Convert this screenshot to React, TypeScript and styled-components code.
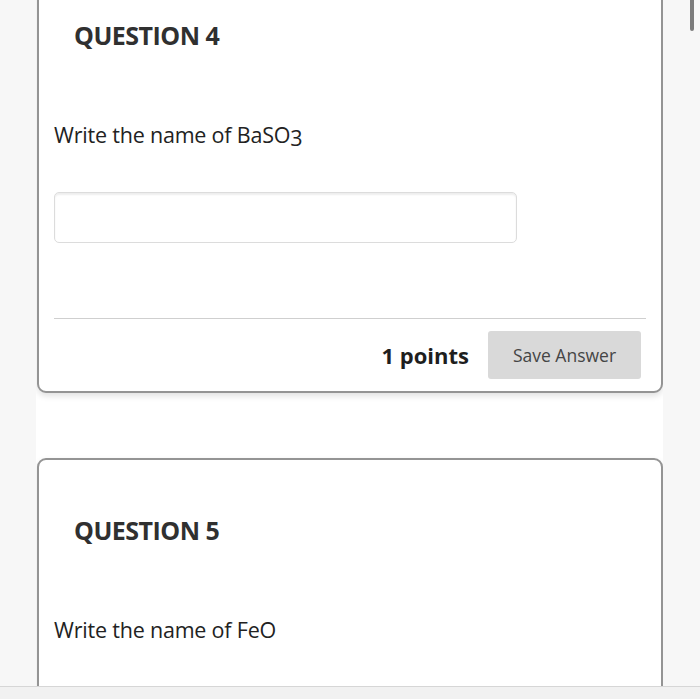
import React from "react";
import styled, { createGlobalStyle } from "styled-components";

const Global = createGlobalStyle`
  html, body { margin: 0; padding: 0; background: #f7f7f7; }
  body { font-family: "Open Sans", "Liberation Sans", sans-serif; }
  * { box-sizing: border-box; }
`;

const Page = styled.div`
  width: 700px;
  height: 699px;
  display: flex;
  flex-direction: column;
  overflow: hidden;
  background: #f7f7f7;
`;

const Viewport = styled.div`
  flex: 1;
  min-height: 0;
  display: flex;
  flex-direction: row;
  overflow: hidden;
`;

const Gutter = styled.div<{ $w: number }>`
  width: ${(p) => p.$w}px;
  flex: none;
  background: #f7f7f7;
  position: relative;
`;

const ScrollThumb = styled.div`
  position: absolute;
  left: 27px;
  top: 0;
  width: 4px;
  height: 31px;
  border-radius: 0 0 2px 2px;
  background: #7c7c7c;
`;

const Column = styled.div`
  width: 627px;
  flex: none;
  background: #ffffff;
  display: flex;
  flex-direction: column;
  gap: 65px;
`;

const Card = styled.section<{ $offset?: number }>`
  margin-left: 1px;
  margin-top: ${(p) => p.$offset ?? 0}px;
  width: 626px;
  height: 430px;
  flex: none;
  border: 2px solid #949494;
  border-radius: 9px;
  background: #fff;
  box-shadow: 0 3px 6px rgba(0, 0, 0, 0.12);
  padding: 52px 15px 11px 15px;
  display: flex;
  flex-direction: column;
`;

const Title = styled.h2`
  margin: 0 0 0 20px;
  font-size: 25px;
  line-height: 36px;
  font-weight: 700;
  letter-spacing: -0.5px;
  color: #303030;
`;

const Prompt = styled.p`
  margin: 67px 0 0 0;
  font-size: 21.5px;
  line-height: 30px;
  font-weight: 400;
  letter-spacing: -0.2px;
  color: #222;
`;

const Sub = styled.span`
  display: inline-block;
  transform: translateY(3px);
`;

const AnswerInput = styled.input`
  margin-top: 42px;
  width: 463px;
  height: 51px;
  flex: none;
  border: 1px solid #dcdcdc;
  border-radius: 5px;
  box-shadow: inset 0 2px 2px rgba(0, 0, 0, 0.07);
  background: #fff;
  outline: none;
  font: inherit;
  padding: 0 12px;
`;

const Divider = styled.hr`
  margin: 75px 0 0 0;
  border: none;
  height: 1px;
  background: #cfcfcf;
`;

const Footer = styled.div`
  margin-top: 12px;
  padding-right: 5px;
  display: flex;
  justify-content: flex-end;
  align-items: center;
  gap: 19px;
`;

const Points = styled.span`
  font-size: 22px;
  font-weight: 700;
  color: #1e1e1e;
  line-height: 30px;
`;

const SaveButton = styled.button`
  width: 153px;
  height: 48px;
  border: none;
  border-radius: 3px;
  background: #d9d9d9;
  color: #454545;
  font-family: "Open Sans", "Liberation Sans", sans-serif;
  font-size: 17.5px;
  padding: 0;
`;

const BottomBar = styled.div`
  height: 13px;
  flex: none;
  border-top: 1px solid #d6d6d6;
  background: #f1f1f1;
`;

type Q = { n: number; prompt: React.ReactNode; inView: boolean };

const questions: Q[] = [
  { n: 4, prompt: <>Write the name of BaSO<Sub>3</Sub></>, inView: true },
  { n: 5, prompt: <>Write the name of FeO</>, inView: false },
];

export default function App() {
  return (
    <>
      <Global />
      <Page>
        <Viewport>
          <Gutter $w={36} />
          <Column>
            {questions.map((q, i) => (
              <Card key={q.n} $offset={i === 0 ? -37 : 0}>
                <Title>QUESTION {q.n}</Title>
                <Prompt>{q.prompt}</Prompt>
                <AnswerInput type="text" aria-label={`Answer ${q.n}`} />
                {q.inView && (
                  <>
                    <Divider />
                    <Footer>
                      <Points>1 points</Points>
                      <SaveButton>Save Answer</SaveButton>
                    </Footer>
                  </>
                )}
              </Card>
            ))}
          </Column>
          <Gutter $w={37}>
            <ScrollThumb />
          </Gutter>
        </Viewport>
        <BottomBar />
      </Page>
    </>
  );
}
